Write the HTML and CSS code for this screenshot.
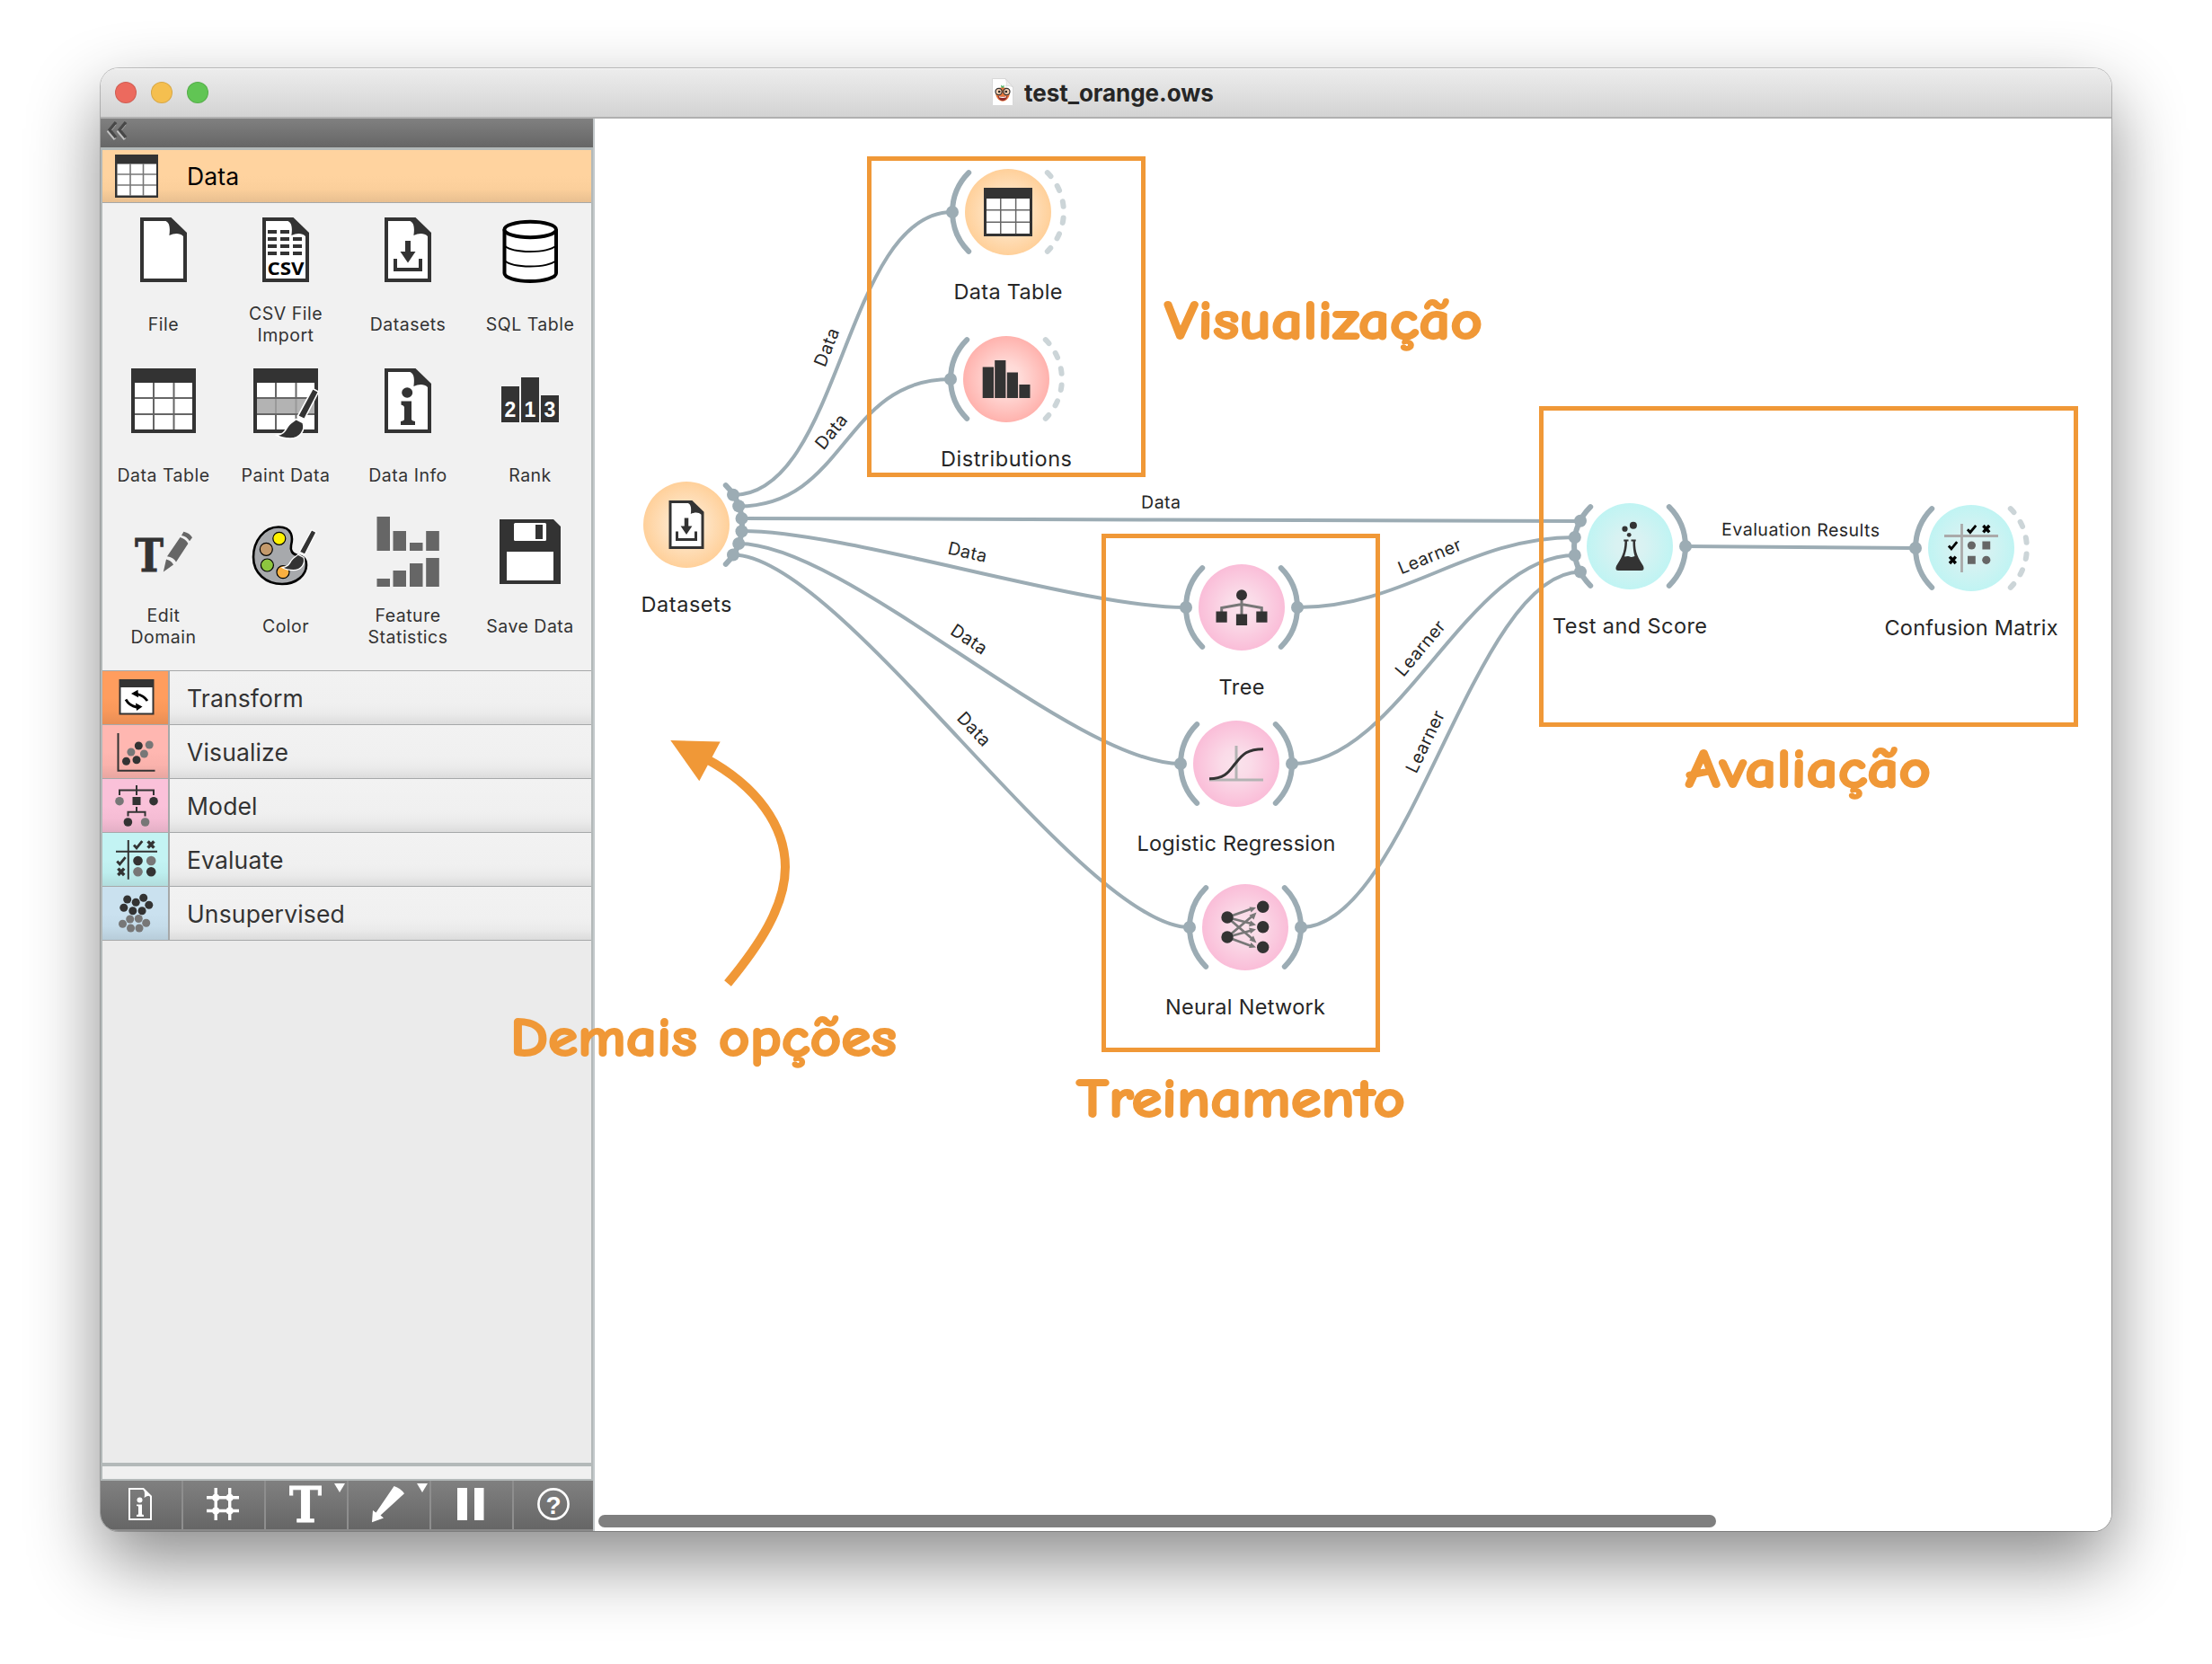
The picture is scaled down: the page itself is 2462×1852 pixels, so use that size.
FILE: index.html
```html
<!DOCTYPE html>
<html lang="pt">
<head>
<meta charset="utf-8">
<title>test_orange.ows</title>
<link rel="stylesheet" href="styles.css">
</head>
<body>
<svg class="defs" width="0" height="0">
  <defs>
    <radialGradient id="gData"><stop offset="0" stop-color="#feeedb"/><stop offset=".35" stop-color="#fee6c9"/><stop offset="1" stop-color="#ffd09a"/></radialGradient>
    <radialGradient id="gVis"><stop offset="0" stop-color="#ffe2e0"/><stop offset=".35" stop-color="#ffdad7"/><stop offset="1" stop-color="#ffb2ad"/></radialGradient>
    <radialGradient id="gModel"><stop offset="0" stop-color="#fae3ec"/><stop offset=".35" stop-color="#fadbe8"/><stop offset="1" stop-color="#fabdd8"/></radialGradient>
    <radialGradient id="gEval"><stop offset="0" stop-color="#def2f2"/><stop offset=".35" stop-color="#d8f2f2"/><stop offset="1" stop-color="#c0f4f3"/></radialGradient>
    <g id="page">
      <path d="M42 16H76.500L94 33V88H42Z" fill="#333"/>
      <path d="M46 20H70.500C75 22 75.500 28 74.400 36C80 33.500 86 33 90 37V84H46Z" fill="#fff"/>
    </g>
    <g id="download">
      <path d="M65 42H71V54H76.500L68 66.500L59.500 54H65Z" fill="#333"/>
      <path d="M54 62V74H82V62" fill="none" stroke="#333" stroke-width="4"/>
    </g>
    <g id="table">
      <path d="M32 16H104V88H32Z" fill="#333"/>
      <path d="M36 32H100V84H36Z" fill="#fff"/>
      <path d="M57 32V84M79.500 32V84M36 49H100M36 67H100" stroke="#666" stroke-width="2"/>
    </g>
    <g id="brush" fill="#333" stroke="#fff" stroke-width="1.600">
      <path d="M98 38.500L104.500 42L88.800 72.500L81.500 69Z"/>
      <path d="M79.500 72.500L87.200 76.500C90 85 84 94 73 94C67 94 62 93 58 90.500C66 89 67 86 70 81C72 77.500 76 75.500 79.500 72.500Z"/>
    </g>
    <path id="check" d="M-4.500 .5L-1.500 3.800L4.800 -3.800" fill="none" stroke-width="2.800"/>
    <path id="cross" d="M-3.400 -3.700L3.400 3.700M3.400 -3.700L-3.400 3.700" fill="none" stroke-width="3.400"/>
    <path id="arcL" class="arc" d="M-43.800 -43.800A62 62 0 0 0 -43.800 43.800"/>
    <path id="arcR" class="arc" d="M43.800 -43.800A62 62 0 0 1 43.800 43.800"/>
    <path id="arcDash" class="arc-dash" d="M43.800 -43.800A62 62 0 0 1 43.800 43.800"/>
  </defs>
</svg>

<div class="window">
  <header class="titlebar">
    <div class="lights"><i class="red"></i><i class="yellow"></i><i class="green"></i></div>
    <svg class="doc" width="24" height="32" viewBox="0 0 24 32">
      <path d="M.5 .5H15L23.500 10V30.500H.5Z" fill="#fff" stroke="#d8d8d8"/>
      <path d="M15 .5C17 4 16.500 7 15.500 9C18 8 21 8.500 23.500 10Z" fill="#eee" stroke="#d0d0d0" stroke-width=".6"/>
      <path d="M10.500 11L10 7.500L12 9L13.500 7.500V11Z" fill="#4bb36b"/>
      <path d="M4 14Q4 10.500 12 10.500T20 14Q20.500 20 16.500 24Q12 27.500 7.500 24Q3.500 20 4 14Z" fill="#e8763a"/>
      <circle cx="7.600" cy="15" r="3.600" fill="#f3cdb0" stroke="#333" stroke-width="1.200"/>
      <circle cx="16.400" cy="15" r="3.600" fill="#f3cdb0" stroke="#333" stroke-width="1.200"/>
      <circle cx="8.200" cy="15" r="1.300" fill="#222"/><circle cx="15.800" cy="15" r="1.300" fill="#222"/>
      <path d="M6.500 20Q12 21.500 17.500 20Q16 25 12 25Q8 25 6.500 20Z" fill="#8c2a2a"/>
      <path d="M8 20.800Q12 22 16 20.800" fill="none" stroke="#fff" stroke-width="1.200"/>
    </svg>
    <span class="title">test_orange.ows</span>
  </header>

  <div class="body">
    <aside class="sidebar">
      <div class="collapse">
        <svg width="32" height="26" viewBox="0 0 32 26">
          <path d="M17 5L10 13.500L17 22M28 5L21 13.500L28 22" transform="translate(-1 1)" fill="none" stroke="#c0c0c0" stroke-width="3.400"/>
          <path d="M17 4L10 12.500L17 21M28 4L21 12.500L28 21" fill="none" stroke="#484848" stroke-width="3.400"/>
        </svg>
      </div>
      <div class="toolbox">
        <div class="cat cat-open">
          <svg width="75" height="58" viewBox="0 0 75 58">
            <path d="M14 5H62V53H14Z" fill="#333"/><path d="M16.500 15.500H60V50.500H16.500Z" fill="#fff"/>
            <path d="M31 15V51M45.500 15V51M16 27H60M16 39H60" stroke="#777" stroke-width="1.600"/>
          </svg>
          <span>Data</span>
        </div>
        <div class="grid">
          <div class="tool"><svg width="136" height="104"><use href="#page"/></svg><span>File</span></div>
          <div class="tool"><svg width="136" height="104"><use href="#page"/>
            <path d="M48 32H58M62 32H72M48 40H58M62 40H72M76 40H86M48 48H58M62 48H72M76 48H86M48 56H58M62 56H72M76 56H86" stroke="#333" stroke-width="4"/>
            <text class="csv" x="68" y="79.500" textLength="41" lengthAdjust="spacingAndGlyphs">CSV</text></svg><span>CSV File<br>Import</span></div>
          <div class="tool"><svg width="136" height="104"><use href="#page"/><use href="#download"/></svg><span>Datasets</span></div>
          <div class="tool"><svg width="136" height="104">
            <path d="M39.500 29.500V78C39.500 83 52 87 68 87S97 83 97 78V29.500" fill="#fff" stroke="#000" stroke-width="4"/>
            <ellipse cx="68.200" cy="29.500" rx="28.800" ry="8.700" fill="#fff" stroke="#000" stroke-width="4"/>
            <path d="M39.500 47.500C44 51.500 55 54 68 54S92 51.500 97 47.500M39.500 64C44 68 55 70.500 68 70.500S92 68 97 64" fill="none" stroke="#000" stroke-width="2"/></svg><span>SQL Table</span></div>
          <div class="tool"><svg width="136" height="104"><use href="#table"/></svg><span>Data Table</span></div>
          <div class="tool"><svg width="136" height="104"><use href="#table"/>
            <path d="M36 50H100V66H36Z" fill="#b3b3b3"/><path d="M57 50V66M79.500 50V66" stroke="#999" stroke-width="2"/>
            <use href="#brush"/></svg><span>Paint Data</span></div>
          <div class="tool"><svg width="136" height="104"><use href="#page"/>
            <ellipse cx="67.200" cy="43" rx="6" ry="5.700" fill="#333"/>
            <path d="M60.500 52.500H72V73Q72.500 74.500 76 75V79H60V75Q63.500 74.500 64 73V59Q63.500 57 60.500 56.500Z" fill="#333"/></svg><span>Data Info</span></div>
          <div class="tool"><svg width="136" height="104">
            <path d="M36 36H56V76H36ZM58 26H78V76H58ZM80 46H100V76H80Z" fill="#333"/>
            <g class="rank"><text x="46" y="69.500">2</text><text x="68" y="69.500">1</text><text x="90" y="69.500">3</text></g></svg><span>Rank</span></div>
          <div class="tool"><svg width="136" height="104">
            <text class="slab dark" x="36" y="74" font-size="49.500" textLength="32" lengthAdjust="spacingAndGlyphs">T</text>
            <path d="M90.400 29.700Q97 31 100 36.300L97 40.300Q94 35 88 34ZM86.500 36Q93 38 95.400 43L82 63.500Q79 58 72 57.300ZM71 60.500Q77 62 79 66.500L67.800 74.500Z" fill="#666"/></svg><span>Edit<br>Domain</span></div>
          <div class="tool"><svg width="136" height="104">
            <path d="M60 24.500C44 24.500 32 40 32 58C32 76 46 88 64 88C80 88 91 78 91 67C91 59 87 57 81 56C75 55 73 50 74 45C76 37 76 24.500 60 24.500Z" fill="#a7a9ac" stroke="#000" stroke-width="2.600"/>
            <g stroke="#000" stroke-width="1.200"><circle cx="60.800" cy="37.300" r="7" fill="#fff200"/><circle cx="46.300" cy="49.300" r="7" fill="#c49a6c"/><circle cx="47.400" cy="67" r="7" fill="#8dc63f"/><circle cx="65" cy="74.700" r="7" fill="#fbb040"/></g>
            <use href="#brush" transform="translate(17.400 -3.600) scale(.81)"/></svg><span>Color</span></div>
          <div class="tool"><svg width="136" height="104">
            <path d="M33.500 13H48V51H33.500ZM51.500 29H66V51H51.500ZM70 42H84.500V51H70ZM88.200 29H102.800V51H88.200ZM33.500 82H48V91H33.500ZM51.500 73H66V91H51.500ZM70 65H84.500V91H70ZM88.200 59H102.800V91H88.200Z" fill="#666"/></svg><span>Feature<br>Statistics</span></div>
          <div class="tool"><svg width="136" height="104">
            <path d="M34 16H94L102 24V88H34Z" fill="#333"/><rect x="50" y="20" width="36" height="20" rx="1.500" fill="#fff"/><path d="M74 22H82V38H74Z" fill="#333"/><path d="M42 52H94V84H42Z" fill="#fff"/></svg><span>Save Data</span></div>
        </div>
        <div class="cat first">
          <svg class="c-transform" width="73" height="59"><path d="M18.500 9H57.500V48.500H18.500Z" fill="#333"/><path d="M20.500 18H55.500V46.500H20.500Z" fill="#fff"/>
            <path d="M50 33Q46 27 38 25.300M26 31.500Q30 38.500 38 40" fill="none" stroke="#000" stroke-width="2.800"/><path d="M32 25L39.500 20.700L40 29.300ZM44.500 39.500L37 35.500L38 44Z"/></svg>
          <span>Transform</span></div>
        <div class="cat">
          <svg class="c-visualize" width="73" height="59"><path d="M17.500 9V50.800H58.500" fill="none" stroke="#333" stroke-width="2"/>
            <g fill="#333"><circle cx="26.500" cy="40.300" r="4.500"/><circle cx="38" cy="38.700" r="4.500"/><circle cx="40.300" cy="23" r="4.500"/></g>
            <g fill="#777"><circle cx="31.900" cy="30" r="4.500"/><circle cx="46.400" cy="32" r="4.500"/><circle cx="52.200" cy="22" r="4.500"/></g></svg>
          <span>Visualize</span></div>
        <div class="cat">
          <svg class="c-model" width="73" height="59"><path d="M38 7V18M19 18V12.500H57V18M38 31V37M28.500 41.500V36.800H47.500V41.500" fill="none" stroke="#333" stroke-width="2"/>
            <path d="M33.500 20H42.500V29H33.500Z" fill="#333"/><g fill="#333"><circle cx="57" cy="24.700" r="4.800"/><circle cx="28.400" cy="48" r="4.800"/></g><g fill="#777"><circle cx="19" cy="24.700" r="4.800"/><circle cx="47.600" cy="48" r="4.800"/></g></svg>
          <span>Model</span></div>
        <div class="cat">
          <svg class="c-evaluate" width="73" height="59"><path d="M28.800 8V51.700M15 20.700H61" stroke="#333" stroke-width="2"/>
            <g stroke="#333"><use href="#check" x="39.500" y="13"/><use href="#cross" x="54" y="13"/><use href="#check" x="20.800" y="31"/><use href="#cross" x="20.800" y="43.300"/></g>
            <g fill="#333"><circle cx="39.500" cy="31" r="5.300"/><circle cx="54.200" cy="43.300" r="5.300"/></g><g fill="#777"><circle cx="54.200" cy="31" r="5.300"/><circle cx="39.500" cy="43.300" r="5.300"/></g></svg>
          <span>Evaluate</span></div>
        <div class="cat">
          <svg class="c-unsupervised" width="73" height="59">
            <g fill="#333"><circle cx="27.700" cy="14" r="4.500"/><circle cx="45.700" cy="12.300" r="4.500"/><circle cx="37.200" cy="17.300" r="4.500"/><circle cx="51.800" cy="20.300" r="4.500"/><circle cx="23.800" cy="23.300" r="4.500"/><circle cx="33.800" cy="26.700" r="4.500"/><circle cx="44.100" cy="26.700" r="4.500"/></g>
            <g fill="#777"><circle cx="30.700" cy="36" r="4.500"/><circle cx="40.300" cy="35.500" r="4.500"/><circle cx="22.500" cy="41.300" r="4.500"/><circle cx="48.700" cy="40.300" r="4.500"/><circle cx="31.500" cy="46" r="4.500"/><circle cx="41" cy="46" r="4.500"/></g></svg>
          <span>Unsupervised</span></div>
      </div>
      <div class="help-pane"></div>
      <div class="toolbar">
        <div class="btn"><svg width="90" height="54"><path d="M32 9H47.500L56 17.500V43H32Z" fill="none" stroke="#fff" stroke-width="2"/><path d="M47 8Q50 13 48.500 19Q53 15.500 57 17.500Z" fill="#fff"/>
          <circle cx="43.500" cy="21.500" r="3" fill="#fff"/><path d="M40 26.500H46V37.500L48 38V40H40V38L42 37.500V28.500L40 28Z" fill="#fff"/></svg></div>
        <div class="btn"><svg width="90" height="54"><path d="M36.200 8V44M51.700 8V44M26 18.700H62M26 33.500H62" stroke="#fff" stroke-width="3.400"/><g fill="#fff"><circle cx="36.200" cy="18.700" r="4"/><circle cx="51.700" cy="18.700" r="4"/><circle cx="36.200" cy="33.500" r="4"/><circle cx="51.700" cy="33.500" r="4"/></g></svg></div>
        <div class="btn"><svg width="90" height="54"><text class="slab light" x="26" y="45.500" font-size="54" textLength="36" lengthAdjust="spacingAndGlyphs">T</text><path d="M76 3H88L82 13Z" fill="#fff"/></svg></div>
        <div class="btn"><svg width="90" height="54"><path d="M50.600 6Q58 8.500 62 14.300L35.500 38.500L39 41.500L26 46.300L27 33L30.500 35.500Z" fill="#fff"/><path d="M76 3H88L82 13Z" fill="#fff"/></svg></div>
        <div class="btn"><svg width="90" height="54"><path d="M29 8H40V44H29ZM48 8H58.500V44H48Z" fill="#fff"/></svg></div>
        <div class="btn"><svg width="88" height="54"><circle cx="44" cy="26" r="16.600" fill="none" stroke="#fff" stroke-width="2.600"/><text class="qm" x="44" y="36.500">?</text></svg></div>
      </div>
    </aside>

    <main class="canvas">
      <svg class="scene" width="1688" height="1572" viewBox="662 132 1688 1572">
        <g class="links">
          <path d="M816 551C936 551 940 236 1060 236"/>
          <path d="M822 563.500C942 563.500 938 422 1058 422"/>
          <path d="M825.500 577C945 577 1639 580 1759 580"/>
          <path d="M825.500 591C945 591 1200 676 1320 676"/>
          <path d="M822 605C942 605 1194 850 1314 850"/>
          <path d="M816 617.500C936 617.500 1204 1032 1324 1032"/>
          <path d="M1444 676C1564 676 1633 598 1753 598"/>
          <path d="M1438 850C1558 850 1633 618 1753 618"/>
          <path d="M1448 1032C1568 1032 1639 636.500 1759 636.500"/>
          <path d="M1876 608L2132 610"/>
        </g>
        <g class="link-text">
          <text transform="translate(938 393.500) rotate(-68.500)" y="-12.500" textLength="44">Data</text>
          <text transform="translate(940 492.800) rotate(-50.600)" y="-12.500" textLength="44">Data</text>
          <text transform="translate(1292 578.500) rotate(.2)" y="-12.800" textLength="44">Data</text>
          <text transform="translate(1072.500 633.500) rotate(12.800)" y="-12.800" textLength="44">Data</text>
          <text transform="translate(1068 727.500) rotate(33.400)" y="-12.500" textLength="44">Data</text>
          <text transform="translate(1070 824.500) rotate(46.900)" y="-12.500" textLength="44">Data</text>
          <text transform="translate(1598.500 637) rotate(-22.400)" y="-12.500" textLength="74">Learner</text>
          <text transform="translate(1595.500 734) rotate(-49.900)" y="-12.500" textLength="74">Learner</text>
          <text transform="translate(1603.500 834) rotate(-64.200)" y="-12.500" textLength="74">Learner</text>
          <text transform="translate(2004 609) rotate(.4)" y="-12.500" textLength="176">Evaluation Results</text>
        </g>

        <g transform="translate(764 584)">
          <use href="#arcR"/><circle r="48" fill="url(#gData)"/>
          <g class="dots"><circle cx="52" cy="-33.300" r="7"/><circle cx="58.200" cy="-20.700" r="7"/><circle cx="61.500" cy="-7" r="7"/><circle cx="61.500" cy="7.200" r="7"/><circle cx="58.200" cy="21" r="7"/><circle cx="52" cy="33.500" r="7"/></g>
          <g transform="scale(.75) translate(-68 -52)"><use href="#page"/><use href="#download"/></g>
          <text class="name" y="97" textLength="101">Datasets</text>
        </g>
        <g transform="translate(1122 236)">
          <use href="#arcL"/><use href="#arcDash"/><circle r="48" fill="url(#gData)"/><circle class="dot" cx="-62" r="7"/>
          <use href="#table" transform="scale(.75) translate(-68 -52)"/>
          <text class="name" y="97" textLength="121">Data Table</text>
        </g>
        <g transform="translate(1120 422)">
          <use href="#arcL"/><use href="#arcDash"/><circle r="48" fill="url(#gVis)"/><circle class="dot" cx="-62" r="7"/>
          <path d="M-26.300 -13.500H-14V21H-26.300ZM-12.800 -21H-.6V21H-12.800ZM.8 -7.500H13V21H.8ZM14.400 6H26.500V21H14.400Z" fill="#333"/>
          <text class="name" y="97" textLength="146">Distributions</text>
        </g>
        <g transform="translate(1382 676)">
          <use href="#arcL"/><use href="#arcR"/><circle r="48" fill="url(#gModel)"/><circle class="dot" cx="-62" r="7"/><circle class="dot" cx="62" r="7"/>
          <path d="M0 -10V9M-22.300 6V.5L0 -3.500L22.300 .5V6" fill="none" stroke="#777" stroke-width="3"/>
          <circle cy="-13.700" r="6" fill="#333"/><path d="M-28.500 4.500H-16.300V16.700H-28.500ZM-6.100 7.500H6.100V20H-6.100ZM16.300 4.500H28.500V16.700H16.300Z" fill="#333"/>
          <text class="name" y="97" textLength="51">Tree</text>
        </g>
        <g transform="translate(1376 850)">
          <use href="#arcL"/><use href="#arcR"/><circle r="48" fill="url(#gModel)"/><circle class="dot" cx="-62" r="7"/><circle class="dot" cx="62" r="7"/>
          <path d="M0 -20V18M-30 18H30" stroke="#b3b3b3" stroke-width="3"/>
          <path d="M-30 16.700C-10 16.700 -7 6 0 -1.500C7 -10 12 -16.300 30 -16.300" fill="none" stroke="#333" stroke-width="3"/>
          <text class="name" y="97" textLength="221">Logistic Regression</text>
        </g>
        <g transform="translate(1386 1032)">
          <use href="#arcL"/><use href="#arcR"/><circle r="48" fill="url(#gModel)"/><circle class="dot" cx="-62" r="7"/><circle class="dot" cx="62" r="7"/>
          <path d="M-20 -11L7 -20.500M-20 -11L7 -4M-20 -11L8.500 13.500M-20 11L8.500 -13M-20 11L7 3.500M-20 11L7 21" stroke="#777" stroke-width="2.800"/>
          <path d="M12 -22L6.500 -16.500L4.500 -22.500ZM12 -2.500L4 -.7L6 -7.500ZM12.500 17.500L4.500 14.500L9 9.500ZM12.500 -16.500L9.500 -8.500L4.500 -13.500ZM12 2.200L6 7L4 .5ZM12 22.500L4 23L6.500 17Z" fill="#777"/>
          <g fill="#333"><circle cx="-20" cy="-11" r="6.700"/><circle cx="-20" cy="11" r="6.700"/><circle cx="19.700" cy="-22.700" r="6.700"/><circle cx="19.700" cy="-.3" r="6.700"/><circle cx="19.700" cy="22.300" r="6.700"/></g>
          <text class="name" y="97" textLength="178">Neural Network</text>
        </g>
        <g transform="translate(1814 608)">
          <use href="#arcL"/><use href="#arcR"/><circle r="48" fill="url(#gEval)"/>
          <g class="dots"><circle cx="-55" cy="-28.300" r="7"/><circle cx="-61.200" cy="-10" r="7"/><circle cx="-61.200" cy="10" r="7"/><circle cx="-55" cy="28.500" r="7"/><circle cx="62" r="7"/></g>
          <g fill="#333"><circle cx="3.900" cy="-23.300" r="4"/><circle cx="-5.500" cy="-19.300" r="3.100"/><circle cx="-.8" cy="-12.700" r="2.400"/>
          <path d="M-6.700 -7.500H-1.500V-5.500H-3C-3 3 -5 8 -6 11.500Q-1 10.500 0 11.500T5.500 11C4 6 3.500 1 3.500 -5.500H1.500V-7.500H6.700V-5.500H6C6 8 9 12 15 22Q17 27 12.500 27H-12.500Q-17 27 -15 22C-9 12 -6 8 -5.500 -5.500H-6.700Z"/></g>
          <text class="name" y="97" textLength="172">Test and Score</text>
        </g>
        <g transform="translate(2194 610)">
          <use href="#arcL"/><use href="#arcDash"/><circle r="48" fill="url(#gEval)"/><circle class="dot" cx="-62" r="7"/>
          <path d="M-10.500 -27V27M-30 -13.500H30" stroke="#aaa" stroke-width="2.800"/>
          <g stroke="#000"><use href="#check" x=".4" y="-21.300"/><use href="#cross" x="16.800" y="-21.300"/><use href="#check" x="-20.600" y="-3"/><use href="#cross" x="-20.600" y="13.300"/></g>
          <g fill="#666"><circle cx=".4" cy="-3" r="4.600"/><circle cx="16.800" cy="13.300" r="4.600"/><path d="M12.400 -7.500H21.200V1.500H12.400ZM-4 8.800H4.800V17.800H-4Z"/></g>
          <text class="name" y="97" textLength="193">Confusion Matrix</text>
        </g>
      </svg>
      <div class="hscroll"></div>
    </main>
  </div>
</div>

<svg class="notes" width="2462" height="1852" viewBox="0 0 2462 1852">
  <g fill="none" stroke="#f09837" stroke-width="5">
    <rect x="967.500" y="176.500" width="305" height="352"/>
    <rect x="1228.500" y="596.500" width="305" height="572"/>
    <rect x="1715.500" y="454.500" width="595" height="352"/>
    <path d="M810 1094.500C845 1052 874 1009 874 965C874 920 843 875 785 844" stroke-width="10"/>
  </g>
  <path d="M746.300 824L801.700 825.500L778.300 869.300Z" fill="#f09837"/>
  <g class="hand">
    <text x="1296" y="376.500" textLength="354" lengthAdjust="spacingAndGlyphs">Visualização</text>
    <text x="1876" y="876" textLength="273" lengthAdjust="spacingAndGlyphs">Avaliação</text>
    <text x="1198" y="1243" textLength="366" lengthAdjust="spacingAndGlyphs">Treinamento</text>
    <text x="568" y="1175" textLength="430" lengthAdjust="spacingAndGlyphs">Demais opções</text>
  </g>
</svg>
</body>
</html>
```

FILE: styles.css
```css
* { box-sizing: border-box; }

body {
  margin: 0;
  width: 2462px;
  height: 1852px;
  padding: 76px 112px 0;
  background: #fff;
  overflow: hidden;
  position: relative;
  font-family: Inter, "Liberation Sans", sans-serif;
}

svg { display: block; overflow: visible; }
.defs { position: absolute; }

.window {
  width: 2238px;
  height: 1628px;
  border-radius: 20px;
  display: flex;
  flex-direction: column;
  overflow: hidden;
  background: #fff;
  box-shadow: 0 0 0 1px rgba(0, 0, 0, .22), 0 34px 80px rgba(0, 0, 0, .46);
}

.titlebar {
  flex: 0 0 56px;
  display: flex;
  align-items: center;
  background: linear-gradient(#ededed, #d3d3d3);
  border-bottom: 2px solid #b0b0b0;
  box-shadow: inset 0 1px 0 #f8f8f8;
}
.lights { display: flex; gap: 16px; width: 976px; padding-left: 16px; }
.lights i { width: 24px; height: 24px; border-radius: 50%; border: 1px solid rgba(0, 0, 0, .12); }
.red { background: #ec6a5e; }
.yellow { background: #f5bf4f; }
.green { background: #61c554; }
.doc { margin: 0 12px 0 16px; }
.title { font-size: 26px; font-weight: 700; color: #262626; letter-spacing: -.05px; }

.body { flex: 1; display: flex; min-height: 0; }

.sidebar {
  flex: none;
  width: 550px;
  display: flex;
  flex-direction: column;
  background: #b3b9b9;
  border-right: 2px solid #c3c8ca;
}
.collapse { flex: 0 0 32px; background: linear-gradient(#808080, #666); }
.toolbox { height: 1461px; margin: 3px 2px 0; background: #ebebeb; }

.cat {
  height: 60px;
  display: flex;
  align-items: center;
  border-bottom: 1px solid #a6a8a9;
  background: linear-gradient(#f2f2f2, #f0f0f0 60%, #ebebeb 80%, #dcdcdc);
  font-size: 26.500px;
  color: #333;
}
.cat.first { height: 60px; }
.cat svg { flex: none; width: 75px; height: 100%; border-right: 2px solid #a6a8a9; }
.cat span { padding-left: 19px; letter-spacing: .15px; }
.cat-open { height: 59px; background: linear-gradient(#ffd39f 50%, #fbcf9b 75%, #e8bf90); color: #000; }
.cat-open svg { border: 0; }
.c-transform { background: linear-gradient(#ff9d5e 50%, #f9985a 75%, #e88e55); }
.c-visualize { background: linear-gradient(#ffb7b1 50%, #fab2ac 75%, #e8a6a1); }
.c-model { background: linear-gradient(#fac1d9 50%, #f5bcd4 75%, #e3afc5); }
.c-evaluate { background: linear-gradient(#c3f3f3 50%, #bdeeee 75%, #b1dddd); }
.c-unsupervised { background: linear-gradient(#cae1ef 50%, #c5dcea 75%, #b7ccd9); }

.grid {
  display: grid;
  grid-template-columns: repeat(4, 136px);
  grid-auto-rows: 168px;
  height: 521px;
  background: #f1f1f1;
  border-bottom: 1px solid #a6a8a9;
}
.tool { display: flex; flex-direction: column; align-items: center; }
.tool span {
  height: 62px;
  display: flex;
  align-items: center;
  text-align: center;
  font-size: 19.500px;
  line-height: 24px;
  letter-spacing: .5px;
  color: #333;
}

.help-pane { height: 14px; margin: 4px 2px 2px; background: #f0f0f0; }

.toolbar {
  flex: 1;
  display: flex;
  background: linear-gradient(#808080, #666 54px, #8a8a8a 54px);
}
.btn { flex: 0 0 92px; height: 54px; border-right: 2px solid #8e8e8e; }
.btn:last-child { flex: 0 0 88px; border: 0; }

.canvas { flex: 1; position: relative; background: #fff; }
.hscroll { position: absolute; left: 4px; top: 1554px; width: 1244px; height: 14px; border-radius: 7px; background: #7f7f7f; }

.arc { fill: none; stroke: #9cacb4; stroke-width: 6; stroke-linecap: round; }
.arc-dash { fill: none; stroke: #ccd5d8; stroke-width: 6; stroke-linecap: round; stroke-dasharray: 5.500 12.880; }
.dot, .dots { fill: #9cacb4; }
.links path { fill: none; stroke: #9cacb4; stroke-width: 4; }
.link-text text { font-size: 19.500px; fill: #262626; text-anchor: middle; }
.name { font-size: 23.500px; fill: #262626; text-anchor: middle; }

.csv { font: bold 19px "Open Sans", sans-serif; text-anchor: middle; }
.rank { font: bold 23px "Liberation Sans", sans-serif; fill: #fff; text-anchor: middle; }
.slab { font-family: "DejaVu Serif", serif; font-weight: bold; }
.dark { fill: #333; stroke: #333; stroke-width: .8; }
.light { fill: #fff; stroke: #fff; stroke-width: 1; }
.qm { font: bold 28px "Liberation Sans", sans-serif; fill: #fff; text-anchor: middle; }

.notes { position: absolute; left: 0; top: 0; }
.hand {
  font-family: "Comic Sans MS", "Comic Neue", Inter, sans-serif;
  font-size: 60px;
  font-weight: 600;
  font-feature-settings: "cv11";
  fill: #f09837;
  stroke: #f09837;
  stroke-width: 2;
  stroke-linejoin: round;
}
```
